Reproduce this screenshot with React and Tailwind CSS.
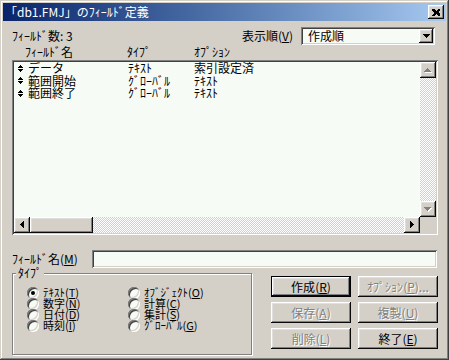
import React from 'react';

// Win98 style bevels
const raised = "shadow-[inset_-1px_-1px_#0a0a0a,inset_1px_1px_#ffffff,inset_-2px_-2px_#808080,inset_2px_2px_#dfdfdf]";
const sunken = "shadow-[inset_1px_1px_#808080,inset_-1px_-1px_#ffffff,inset_2px_2px_#404040,inset_-2px_-2px_#d4d0c8]";
const track = "bg-[image:repeating-conic-gradient(#d4d0c8_0%_25%,#ffffff_0%_50%)] bg-[length:2px_2px]";

const FIELDS = [
    { name: 'データ', type: 'ﾃｷｽﾄ', opt: '索引設定済' },
    { name: '範囲開始', type: 'ｸﾞﾛｰﾊﾞﾙ', opt: 'ﾃｷｽﾄ' },
    { name: '範囲終了', type: 'ｸﾞﾛｰﾊﾞﾙ', opt: 'ﾃｷｽﾄ' },
];

const TYPES_LEFT = [['ﾃｷｽﾄ', 'T', true], ['数字', 'N'], ['日付', 'D'], ['時刻', 'I']];
const TYPES_RIGHT = [['ｵﾌﾞｼﾞｪｸﾄ', 'O'], ['計算', 'C'], ['集計', 'S'], ['ｸﾞﾛｰﾊﾞﾙ', 'G']];

const Key = ({ t, k, tail }) => (
    <span>{t}(<span className="underline">{k}</span>){tail}</span>
);

const Arrow = ({ dir, disabled }) => {
    const pts = {
        up: [[3, 0, 1], [2, 1, 3], [1, 2, 5], [0, 3, 7]],
        down: [[0, 0, 7], [1, 1, 5], [2, 2, 3], [3, 3, 1]],
    };
    if (dir === 'left' || dir === 'right') {
        const cols = dir === 'right' ? [[0, 0, 7], [1, 1, 5], [2, 2, 3], [3, 3, 1]] : [[3, 0, 7], [2, 1, 5], [1, 2, 3], [0, 3, 1]];
        return (
            <svg width="5" height="8" shapeRendering="crispEdges">
                {cols.map(([x, y, h], i) => <rect key={i} x={x} y={y} width="1" height={h} fill="#000" />)}
            </svg>
        );
    }
    return (
        <svg width="8" height="5" shapeRendering="crispEdges">
            {disabled && pts[dir].map(([x, y, w], i) => <rect key={'s' + i} x={x + 1} y={y + 1} width={w} height="1" fill="#fff" />)}
            {pts[dir].map(([x, y, w], i) => <rect key={i} x={x} y={y} width={w} height="1" fill={disabled ? '#808080' : '#000'} />)}
        </svg>
    );
};

const SortIcon = () => (
    <svg width="5" height="7" shapeRendering="crispEdges" className="shrink-0">
        <rect x="2" y="0" width="1" height="1" fill="#000" />
        <rect x="1" y="1" width="3" height="1" fill="#000" />
        <rect x="0" y="2" width="5" height="1" fill="#000" />
        <rect x="0" y="4" width="5" height="1" fill="#000" />
        <rect x="1" y="5" width="3" height="1" fill="#000" />
        <rect x="2" y="6" width="1" height="1" fill="#000" />
    </svg>
);

const Radio = ({ label, k, checked }) => (
    <div className="flex items-center h-[11px] gap-[4px] text-[11px] leading-[11px]">
        <span className={`relative shrink-0 w-[12px] h-[12px] rounded-full bg-[#f6fbf6] ${sunken}`}>
            {checked && <span className="absolute left-[4px] top-[4px] w-[4px] h-[4px] rounded-full bg-black" />}
        </span>
        <Key t={label} k={k} />
    </div>
);

const Button = ({ children, disabled, isDefault }) => (
    <div className={`h-[21px] w-[80px] flex items-center justify-center ${isDefault ? 'border border-black' : ''}`}>
        <div className={`w-full h-full flex items-center justify-center bg-[#d4d0c8] ${raised} ${disabled ? 'text-[#808080] [text-shadow:1px_1px_#ffffff]' : 'text-black'}`}>
            {children}
        </div>
    </div>
);

function App() {
    return (
        <div className={`w-[449px] h-[360px] bg-[#d4d0c8] p-[3px] flex flex-col text-[12px] leading-none text-black font-['Noto_Sans_CJK_JP',sans-serif] shadow-[inset_-1px_-1px_#404040,inset_1px_1px_#d4d0c8,inset_-2px_-2px_#808080,inset_2px_2px_#ffffff]`}>
            {/* Title bar */}
            <div className="h-[18px] flex items-center bg-gradient-to-r from-[#0a246a] to-[#a6caf0] pl-[2px] pr-[2px]">
                <span className="text-white text-[12px]">「db1.FMJ」のﾌｨｰﾙﾄﾞ定義</span>
                <div className={`ml-auto w-[16px] h-[14px] bg-[#d4d0c8] flex items-center justify-center ${raised}`}>
                    <svg width="8" height="7" shapeRendering="crispEdges">
                        <path d="M0 0h2l2 2 2-2h2v1l-2 2 2 2v2h-2l-2-2-2 2h-2v-1l2-2-2-2z" fill="#000" />
                    </svg>
                </div>
            </div>

            <div className="flex-1 flex flex-col pl-[9px] pr-[8px]">
                {/* Count + sort order */}
                <div className="mt-[6px] h-[18px] flex items-center">
                    <span>ﾌｨｰﾙﾄﾞ数: 3</span>
                    <span className="ml-auto mr-[8px]"><Key t="表示順" k="V" /></span>
                    <div className={`w-[134px] h-[18px] mr-[3px] p-[2px] flex items-center bg-[#f6fbf6] ${sunken}`}>
                        <span className="pl-[5px]">作成順</span>
                        <div className={`ml-auto w-[14px] h-[14px] bg-[#d4d0c8] flex items-center justify-center ${raised}`}>
                            <svg width="7" height="4" shapeRendering="crispEdges">
                                <rect x="0" y="0" width="7" height="1" fill="#000" />
                                <rect x="1" y="1" width="5" height="1" fill="#000" />
                                <rect x="2" y="2" width="3" height="1" fill="#000" />
                                <rect x="3" y="3" width="1" height="1" fill="#000" />
                            </svg>
                        </div>
                    </div>
                </div>

                {/* Column headers */}
                <div className="h-[13px] flex items-center pl-[13px]">
                    <span className="w-[102px]">ﾌｨｰﾙﾄﾞ名</span>
                    <span className="w-[67px]">ﾀｲﾌﾟ</span>
                    <span>ｵﾌﾟｼｮﾝ</span>
                </div>

                {/* Field list */}
                <div className={`mt-[2px] h-[175px] p-[2px] flex flex-col bg-[#f6fbf6] ${sunken}`}>
                    <div className="flex flex-1 min-h-0">
                        <div className="flex-1">
                            {FIELDS.map(f => (
                                <div key={f.name} className="h-[12.5px] flex items-center pl-[4px]">
                                    <SortIcon />
                                    <span className="w-[105px] pl-[5px]">{f.name}</span>
                                    <span className="w-[66px]">{f.type}</span>
                                    <span>{f.opt}</span>
                                </div>
                            ))}
                        </div>
                        <div className="w-[16px] flex flex-col">
                            <div className={`h-[16px] bg-[#d4d0c8] flex items-center justify-center ${raised}`}><Arrow dir="up" disabled /></div>
                            <div className={`flex-1 ${track}`} />
                            <div className={`h-[16px] bg-[#d4d0c8] flex items-center justify-center ${raised}`}><Arrow dir="down" disabled /></div>
                        </div>
                    </div>
                    <div className="h-[16px] flex">
                        <div className={`w-[16px] bg-[#d4d0c8] flex items-center justify-center ${raised}`}><Arrow dir="left" /></div>
                        <div className={`w-[63px] bg-[#d4d0c8] ${raised}`} />
                        <div className={`flex-1 ${track}`} />
                        <div className={`w-[16px] bg-[#d4d0c8] flex items-center justify-center ${raised}`}><Arrow dir="right" /></div>
                        <div className="w-[16px] bg-[#d4d0c8]" />
                    </div>
                </div>

                {/* Field name input */}
                <div className="mt-[15px] h-[18px] flex items-center">
                    <span className="w-[80px]"><Key t="ﾌｨｰﾙﾄﾞ名" k="M" /></span>
                    <div className={`flex-1 h-[18px] mr-[1px] bg-[#f6fbf6] ${sunken}`} />
                </div>

                {/* Type group + buttons */}
                <div className="mt-[5px] flex items-start">
                    <div className="relative w-[240px] h-[82px] border border-[#808080] shadow-[inset_1px_1px_#ffffff,1px_1px_#ffffff] pt-[13px] pl-[14px] flex">
                        <span className="absolute left-[3px] top-[-7px] px-[2px] bg-[#d4d0c8]">ﾀｲﾌﾟ</span>
                        <div className="w-[101px] flex flex-col">
                            {TYPES_LEFT.map(([t, k, c]) => <Radio key={k} label={t} k={k} checked={c} />)}
                        </div>
                        <div className="flex flex-col">
                            {TYPES_RIGHT.map(([t, k]) => <Radio key={k} label={t} k={k} />)}
                        </div>
                    </div>
                    <div className="ml-[19px] mt-[3px] grid grid-cols-2 gap-x-[7px] gap-y-[5px]">
                        <Button isDefault><Key t="作成" k="R" /></Button>
                        <Button disabled><Key t="ｵﾌﾟｼｮﾝ" k="P" tail="..." /></Button>
                        <Button disabled><Key t="保存" k="A" /></Button>
                        <Button disabled><Key t="複製" k="U" /></Button>
                        <Button disabled><Key t="削除" k="L" /></Button>
                        <Button><Key t="終了" k="E" /></Button>
                    </div>
                </div>
            </div>
        </div>
    );
}

export default App;
